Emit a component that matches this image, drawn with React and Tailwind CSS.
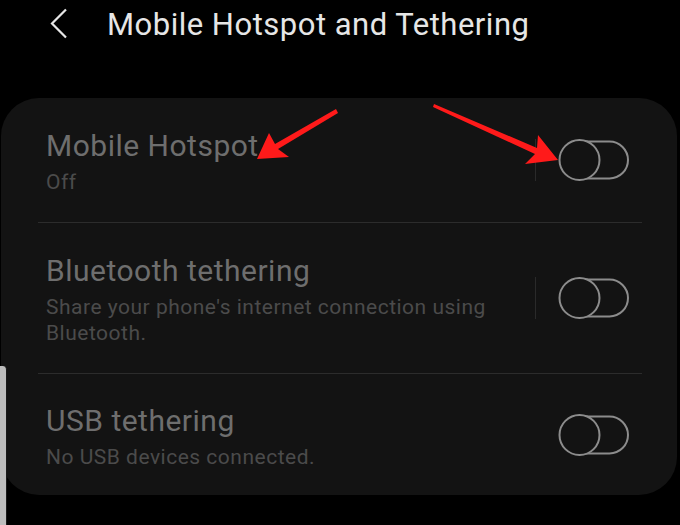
import React from "react";

function Toggle() {
  return (
    <svg width="72" height="42" viewBox="0 0 72 42" className="block">
      <rect x="4" y="2.5" width="66" height="37" rx="18.5" fill="none" stroke="#8c8c8c" strokeWidth="2" />
      <circle cx="21.5" cy="21" r="20" fill="#131313" stroke="#8c8c8c" strokeWidth="2" />
    </svg>
  );
}

function Row({ title, sub, h, divider, pt = "pt-[30px]" }) {
  return (
    <div className={`flex ${h}`}>
      <div className={`flex-1 pl-[45px] ${pt}`}>
        <div className="text-[30px] leading-[36px] tracking-[0.5px] text-[#6e6e6e]">{title}</div>
        <div className="mt-[5px] text-[21px] leading-[26px] tracking-[0.5px] text-[#4b4b4b] pr-[10px]">{sub}</div>
      </div>
      <div className="flex items-center pr-[47px]">
        <div className={`w-px h-[42px] mr-[22px] ${divider ? "bg-[#2a2a2a]" : "bg-transparent"}`} />
        <Toggle />
      </div>
    </div>
  );
}

export default function App() {
  return (
    <div
      className="relative w-[680px] h-[525px] bg-black overflow-hidden"
      style={{ fontFamily: "Roboto, 'Noto Sans', sans-serif" }}
    >
      <div className="flex items-start pl-[50px] pt-[7px] h-[43px]">
        <svg width="20" height="32" viewBox="0 0 20 32" className="mt-[1px] block">
          <path d="M16 1.5 L2 15.5 L16 29.5" fill="none" stroke="#e6e6e6" strokeWidth="2.2" />
        </svg>
        <div className="ml-[37px] text-[31px] leading-[36px] tracking-[0.5px] text-[#e6e6e6]">
          Mobile Hotspot and Tethering
        </div>
      </div>

      <div className="ml-[1px] mt-[55px] w-[676px] rounded-[38px] bg-[#131313]">
        <Row title="Mobile Hotspot" sub="Off" h="h-[124px]" divider />
        <div className="ml-[37px] mr-[35px] h-px bg-[#2c2c2c]" />
        <Row
          title="Bluetooth tethering"
          sub="Share your phone's internet connection using Bluetooth."
          h="h-[150px]"
          divider
        />
        <div className="ml-[37px] mr-[35px] h-px bg-[#2c2c2c]" />
        <Row title="USB tethering" sub="No USB devices connected." h="h-[121px]" pt="pt-[29px]" />
      </div>

      <div className="absolute left-0 top-[366px] w-[7px] h-[170px] bg-[#bdbdbd] rounded-tr-[4px] border-r border-[#1a1a1a]" />

      <svg className="absolute left-0 top-0 pointer-events-none" width="680" height="525" viewBox="0 0 680 525">
        <polygon
          points="336,109 275,144 269,133 257,159 289,157 278,149 338,113"
          fill="#ff1a1a"
        />
        <polygon
          points="434,104 537,148 538,135 558,160 525,164 535,154 433,107"
          fill="#ff1a1a"
        />
      </svg>
    </div>
  );
}
